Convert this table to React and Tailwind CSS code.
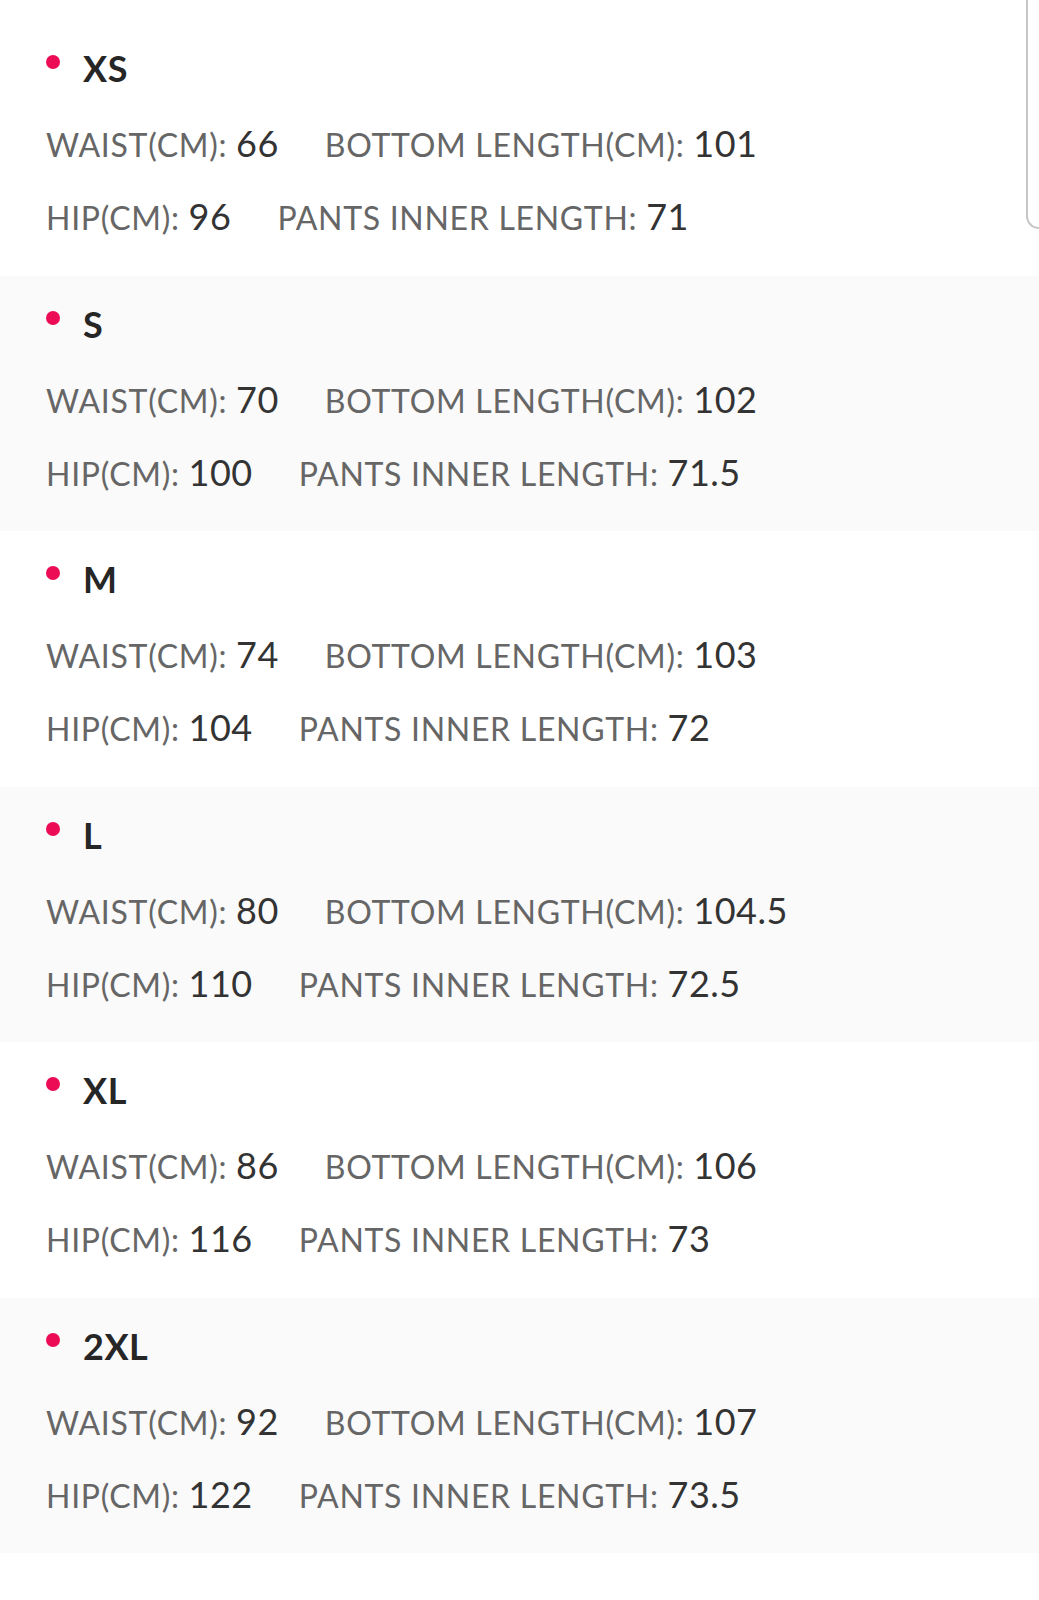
const sizes = [
  { name: "XS", waist: "66", bottom: "101", hip: "96", inner: "71" },
  { name: "S", waist: "70", bottom: "102", hip: "100", inner: "71.5" },
  { name: "M", waist: "74", bottom: "103", hip: "104", inner: "72" },
  { name: "L", waist: "80", bottom: "104.5", hip: "110", inner: "72.5" },
  { name: "XL", waist: "86", bottom: "106", hip: "116", inner: "73" },
  { name: "2XL", waist: "92", bottom: "107", hip: "122", inner: "73.5" },
];

function Field({ label, value }) {
  return (
    <span className="whitespace-nowrap">
      <span className="text-[32px] tracking-[0.7px] text-[#666666]">{label}: </span>
      <span className="text-[36px] tracking-[0.5px] text-[#333333]">{value}</span>
    </span>
  );
}

function SizeRow({ size, shaded }) {
  return (
    <div className={`h-[255.5px] flex flex-col pl-[46px] ${shaded ? "bg-[#fafafa]" : "bg-white"}`}>
      {/* Title */}
      <div className="h-[96px] flex items-center">
        <span className="w-[14px] h-[14px] rounded-full bg-[#ec0c55] -mt-[12px]" />
        <span className="ml-[23px] text-[36px] font-bold tracking-[0.5px] text-[#262626] leading-none">{size.name}</span>
      </div>

      {/* Waist / bottom length */}
      <div className="h-[54px] flex items-center gap-[46px] leading-none">
        <Field label="WAIST(CM)" value={size.waist} />
        <Field label="BOTTOM LENGTH(CM)" value={size.bottom} />
      </div>

      {/* Hip / inner length */}
      <div className="h-[92px] flex items-center gap-[46px] leading-none">
        <Field label="HIP(CM)" value={size.hip} />
        <Field label="PANTS INNER LENGTH" value={size.inner} />
      </div>
    </div>
  );
}

export default function App() {
  return (
    <div className="relative w-[1039px] h-[1600px] bg-white overflow-hidden font-['Lato',sans-serif]">
      <div className="pt-[20px]">
        {sizes.map((s, i) => (
          <SizeRow key={s.name} size={s} shaded={i % 2 === 1} />
        ))}
      </div>

      {/* scroll edge */}
      <div className="absolute top-0 right-0 w-[13px] h-[229px] border-l-2 border-b-2 border-[#c6c6c6] rounded-bl-[14px]" />
    </div>
  );
}
